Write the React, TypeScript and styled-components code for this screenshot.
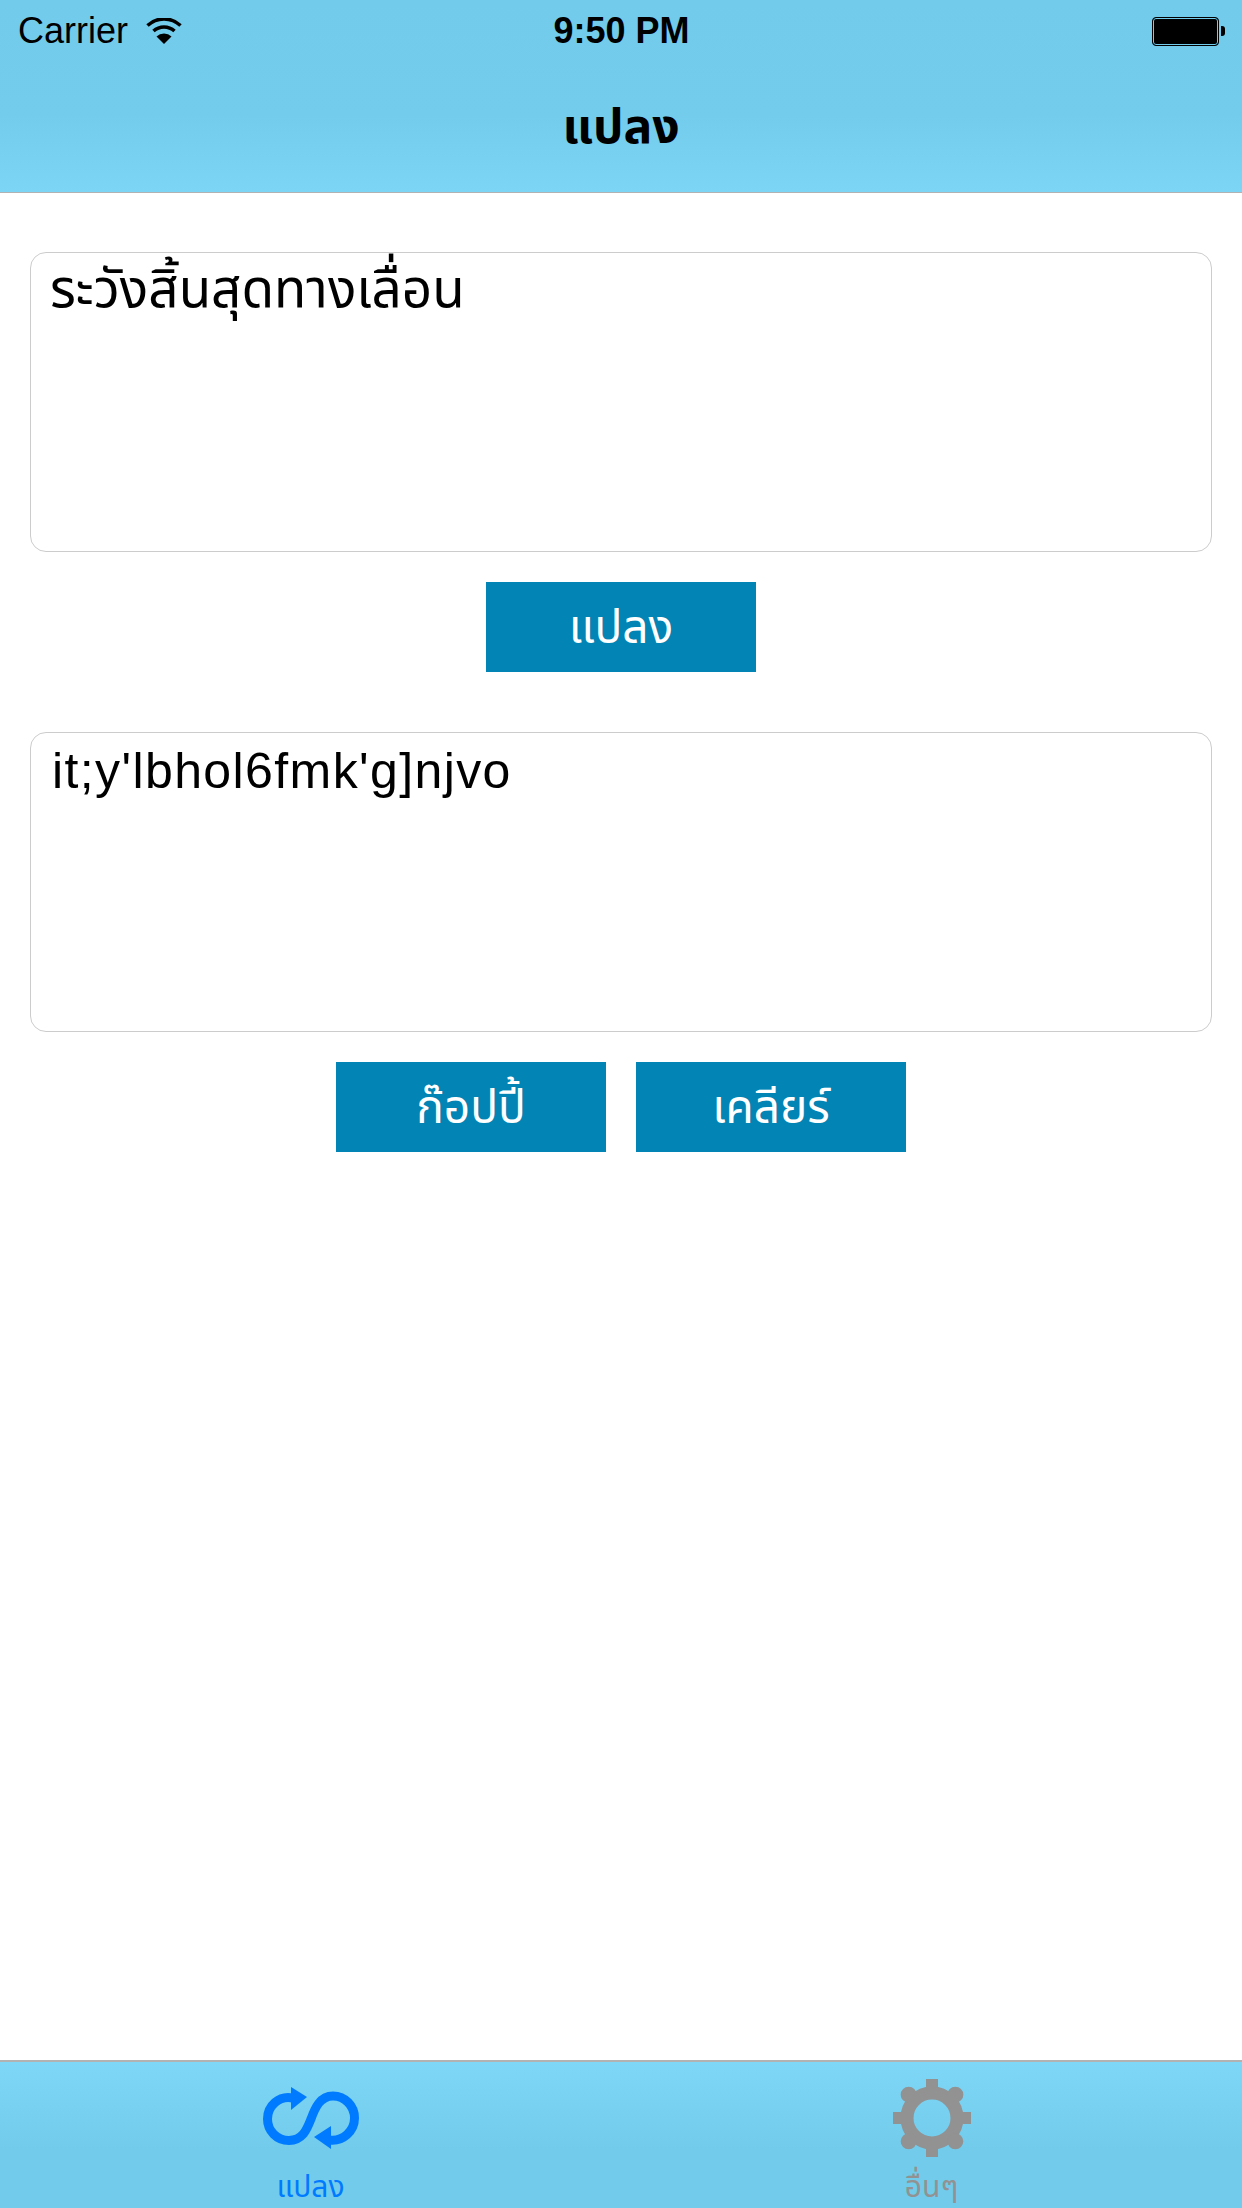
import React from 'react'
import styled, { createGlobalStyle } from 'styled-components'

const THAI = '"Noto Sans Thai", "Noto Sans Thai Looped", "Liberation Sans", "Noto Sans", sans-serif'
const LATIN = '"Liberation Sans", Arial, sans-serif'

const GlobalStyle = createGlobalStyle`
  html, body {
    margin: 0;
    padding: 0;
    background: #fff;
  }
  * {
    box-sizing: border-box;
  }
`

const Screen = styled.div`
  width: 1242px;
  height: 2208px;
  display: flex;
  flex-direction: column;
  background: #fff;
`

const Header = styled.header`
  height: 193px;
  flex: none;
  display: flex;
  flex-direction: column;
  background: linear-gradient(180deg, #72cbeb 0%, #73ccec 60%, #7dd5f6 100%);
  border-bottom: 1px solid #b2b2b2;
`

const StatusBar = styled.div`
  height: 62px;
  padding: 0 17px 0 18px;
  display: grid;
  grid-template-columns: 1fr auto 1fr;
  align-items: center;
  font-family: ${LATIN};
  color: #000;
`

const Carrier = styled.div`
  display: flex;
  align-items: center;
  gap: 18px;
  font-size: 36px;
`

const Clock = styled.div`
  font-size: 36px;
  font-weight: 700;
`

const Battery = styled.div`
  justify-self: end;
  display: flex;
  align-items: center;
  gap: 2px;
`

const BatteryBody = styled.div`
  width: 67px;
  height: 29px;
  background: #000;
  border-radius: 4px;
  box-shadow: inset 0 0 0 1px #72cbeb;
  border: 1px solid #000;
`

const BatteryTip = styled.div`
  width: 4px;
  height: 10px;
  background: #000;
  border-radius: 0 3px 3px 0;
`

const Title = styled.h1`
  margin: 0;
  flex: 1;
  display: flex;
  align-items: center;
  justify-content: center;
  padding-top: 2px;
  font-family: ${THAI};
  font-size: 48px;
  font-weight: 700;
  color: #000;
`

const Main = styled.main`
  flex: 1;
  padding: 59px 30px 0;
  display: flex;
  flex-direction: column;
  gap: 30px;
`

const Section = styled.section`
  display: flex;
  flex-direction: column;
  align-items: center;
  gap: 30px;
  & + & {
    margin-top: 30px;
  }
`

const TextBox = styled.div<{ $latin?: boolean }>`
  width: 100%;
  height: 300px;
  border: 1.5px solid #cccccc;
  border-radius: 16px;
  padding: ${(p) => (p.$latin ? '3px 0 0 21px' : '3px 0 0 19px')};
  font-family: ${(p) => (p.$latin ? LATIN : THAI)};
  font-size: ${(p) => (p.$latin ? 50 : 53)}px;
  letter-spacing: ${(p) => (p.$latin ? 1.4 : 0)}px;
  line-height: 70px;
  color: #000;
`

const ButtonRow = styled.div`
  display: flex;
  justify-content: center;
  gap: 30px;
`

const ActionButton = styled.button`
  width: 270px;
  height: 90px;
  border: none;
  padding: 4px 0 0;
  background: #0284b4;
  color: #fff;
  font-family: ${THAI};
  font-size: 46px;
`

const TabBar = styled.nav`
  height: 148px;
  flex: none;
  display: grid;
  grid-template-columns: 1fr 1fr;
  background: linear-gradient(180deg, #7fd7f7 0%, #72cbeb 60%, #72cbeb 100%);
  border-top: 2px solid #b2b2b2;
`

const Tab = styled.div<{ $active?: boolean }>`
  display: flex;
  flex-direction: column;
  align-items: center;
  padding-top: 17px;
  color: ${(p) => (p.$active ? '#007aff' : '#929292')};
`

const TabIcon = styled.div`
  height: 78px;
  display: flex;
  align-items: center;
`

const TabLabel = styled.div`
  font-family: ${THAI};
  font-size: 30px;
  line-height: 40px;
  margin-top: 11px;
`

const WifiIcon = () => (
  <svg width="36" height="26" viewBox="0 0 36 26" style={{ display: 'block' }}>
    <path d="M18 26 L10.5 18.5 A11 11 0 0 1 25.5 18.5 Z" fill="#000" />
    <path d="M7.5 13 A15.5 15.5 0 0 1 28.5 13" fill="none" stroke="#000" strokeWidth="3.5" />
    <path d="M1.5 7.5 A24 24 0 0 1 34.5 7.5" fill="none" stroke="#000" strokeWidth="3.5" />
  </svg>
)

const ConvertIcon = () => (
  <svg width="96" height="62" viewBox="0 0 96 62" style={{ display: 'block' }}>
    <path
      d="M30 11 C16 8 4.5 19 4.5 32 C4.5 44 14 53.5 26 53.5 C40 53.5 44 42 48 32 C52 21 57 9 70 9 C82 9 91.5 19 91.5 31 C91.5 44 80 55 66 53"
      fill="none"
      stroke="currentColor"
      strokeWidth="9"
    />
    <path d="M28 0 L44 10 L28 23 Z" fill="currentColor" />
    <path d="M68 39 L51 50 L68 62 Z" fill="currentColor" />
  </svg>
)

const GearIcon = () => (
  <svg width="78" height="78" viewBox="-39 -39 78 78" style={{ display: 'block' }}>
    <circle r="25" fill="none" stroke="currentColor" strokeWidth="13" />
    {[0, 90, 180, 270].map((a) => (
      <rect key={a} x="-6" y="-39" width="12" height="12" fill="currentColor" transform={`rotate(${a})`} />
    ))}
    {[45, 135, 225, 315].map((a) => (
      <circle key={a} cy="-33" r="8" fill="currentColor" transform={`rotate(${a})`} />
    ))}
  </svg>
)

export default function App() {
  return (
    <Screen>
      <GlobalStyle />
      <Header>
        <StatusBar>
          <Carrier>
            Carrier
            <WifiIcon />
          </Carrier>
          <Clock>9:50 PM</Clock>
          <Battery>
            <BatteryBody />
            <BatteryTip />
          </Battery>
        </StatusBar>
        <Title>แปลง</Title>
      </Header>
      <Main>
        <Section>
          <TextBox>ระวังสิ้นสุดทางเลื่อน</TextBox>
          <ActionButton>แปลง</ActionButton>
        </Section>
        <Section>
          <TextBox $latin>it;y'lbhol6fmk'g]njvo</TextBox>
          <ButtonRow>
            <ActionButton>ก๊อปปี้</ActionButton>
            <ActionButton>เคลียร์</ActionButton>
          </ButtonRow>
        </Section>
      </Main>
      <TabBar>
        <Tab $active>
          <TabIcon>
            <ConvertIcon />
          </TabIcon>
          <TabLabel>แปลง</TabLabel>
        </Tab>
        <Tab>
          <TabIcon>
            <GearIcon />
          </TabIcon>
          <TabLabel>อื่นๆ</TabLabel>
        </Tab>
      </TabBar>
    </Screen>
  )
}
